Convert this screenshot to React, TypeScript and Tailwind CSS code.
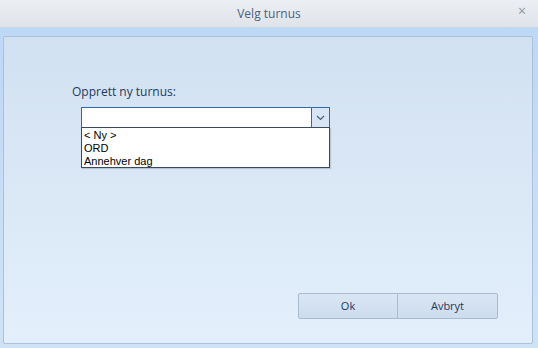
import React from "react";

export default function App() {
  return (
    <div
      className="w-[538px] h-[348px] flex flex-col overflow-hidden bg-[#c6def7]"
      style={{ fontFamily: '"Open Sans", "Noto Sans", sans-serif' }}
    >
      <div className="h-[28px] shrink-0 relative flex items-center justify-center bg-gradient-to-b from-[#eceff3] to-[#dfe4ea] border-b border-[#c9d6e4]">
        <span className="text-[12px] text-[#4d5f7d]">Velg turnus</span>
        <span className="absolute right-[12px] top-[4px] text-[14px] text-[#8a96a6] leading-none">×</span>
      </div>
      <div className="flex-1 flex flex-col pt-[8px] pl-[3px] pr-[5px] pb-[4px] bg-gradient-to-b from-[#bdd8f6] to-[#cfe3f7]">
        <div className="flex-1 flex flex-col rounded-[2px] border border-[#a9c1da] bg-gradient-to-b from-[#d2e1f1] to-[#e3effb] pl-[68px] pr-[34px]">
          <div className="mt-[47px] text-[12px] text-[#1e3a60] leading-[16px]">Opprett ny turnus:</div>
          <div className="ml-[9px] mt-[7px] w-[249px] relative">
            <div className="h-[21px] flex border border-[#2d6ca6] bg-white">
              <div className="flex-1" />
              <div className="w-[18px] h-full flex items-center justify-center bg-[#d7e5f4] border-l border-[#2d6ca6]">
                <svg width="9" height="6" viewBox="0 0 9 6">
                  <path d="M1 1 L4.5 4.5 L8 1" fill="none" stroke="#4a5d78" strokeWidth="1.2" />
                </svg>
              </div>
            </div>
            <div
              className="absolute left-0 top-[20px] w-[249px] h-[41px] bg-white border border-[#3c4a5a] pl-[2px] pt-[1px] text-[11px] leading-[13px] text-black shadow-[1px_1px_1px_rgba(0,0,0,0.15)]"
              style={{ fontFamily: '"Liberation Sans", Arial, sans-serif' }}
            >
              <div>&lt; Ny &gt;</div>
              <div>ORD</div>
              <div>Annehver dag</div>
            </div>
          </div>
          <div className="flex-1" />
          <div className="flex justify-end mb-[24px]">
            <div className="flex rounded-[2px] border border-[#a8bbd2] bg-gradient-to-b from-[#dae6f3] to-[#cddcee] text-[11px] text-[#1e3a60]">
              <div className="w-[99px] h-[24px] flex items-center justify-center border-r border-[#a8bbd2]">Ok</div>
              <div className="w-[99px] h-[24px] flex items-center justify-center">Avbryt</div>
            </div>
          </div>
        </div>
      </div>
    </div>
  );
}
